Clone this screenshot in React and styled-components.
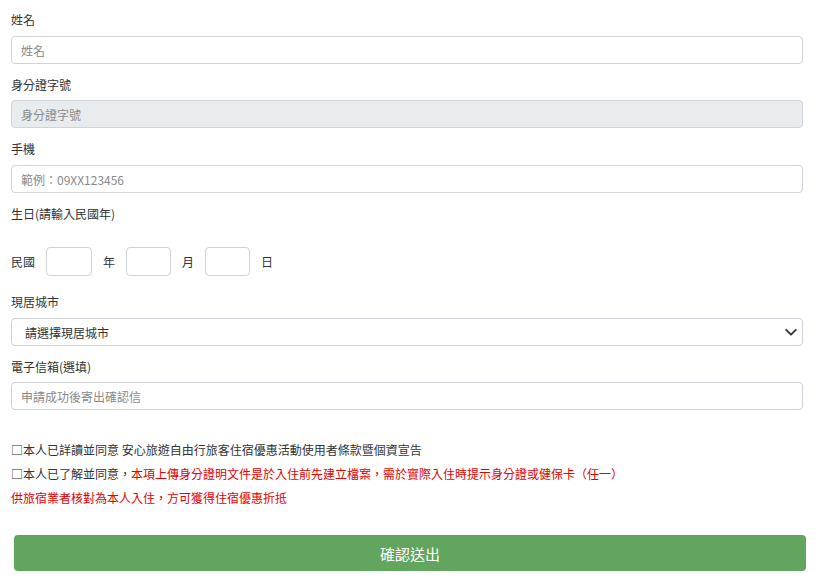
import React from "react";
import styled, { createGlobalStyle } from "styled-components";

const Global = createGlobalStyle`
  html, body { margin: 0; padding: 0; background: #fff; }
  body {
    font-family: "Noto Sans CJK TC", "Noto Sans", "Liberation Sans", sans-serif;
    color: #333;
    font-size: 12px;
  }
  * { box-sizing: border-box; }
`;

const Form = styled.form`
  display: flex;
  flex-direction: column;
  padding: 11px 16px 0 11px;
`;

const Field = styled.div`
  display: flex;
  flex-direction: column;
  margin-bottom: ${(p) => p.$mb ?? 12}px;
`;

const Label = styled.label`
  font-size: 12px;
  line-height: 18px;
  color: #333;
  margin-bottom: ${(p) => p.$mb ?? 7}px;
`;

const Input = styled.input`
  width: 100%;
  height: 28px;
  border: 1px solid #ced4da;
  border-radius: 4px;
  padding: 0 9px;
  font-family: inherit;
  font-size: 12px;
  color: #333;
  background: ${(p) => (p.disabled ? "#e9ecef" : "#fff")};
  outline: none;
  &::placeholder { color: #8a8a8a; }
`;

const DateRow = styled.div`
  display: flex;
  align-items: center;
  gap: 11px;
  margin-top: 24px;
  margin-bottom: 17px;
`;

const DateText = styled.span`
  font-size: 12px;
  color: #333;
`;

const DateBox = styled.input`
  width: ${(p) => p.$w}px;
  height: 29px;
  border: 1px solid #ced4da;
  border-radius: 4px;
  outline: none;
  background: #fff;
  padding: 0 6px;
  font-size: 12px;
`;

const SelectWrap = styled.div`
  height: 28px;
  border: 1px solid #ced4da;
  border-radius: 4px;
  display: flex;
  align-items: center;
  padding: 0 13px;
  background: #fff;
`;

const SelectText = styled.span`
  font-size: 12px;
  color: #333;
  flex: 1;
`;

const Chevron = styled.svg`
  width: 14px;
  height: 14px;
  margin-right: -9px;
`;

const Terms = styled.div`
  display: flex;
  flex-direction: column;
  margin-top: 28px;
  font-size: 12px;
  line-height: 24px;
`;

const Line = styled.div`
  color: ${(p) => (p.$red ? "#e60000" : "#333")};
  white-space: nowrap;
`;

const Red = styled.span`
  color: #e60000;
`;

const Button = styled.button`
  margin: 25px 0 0 3px;
  height: 36px;
  width: 792px;
  border: none;
  border-radius: 4px;
  background: #62a55f;
  color: #fff;
  font-family: inherit;
  font-size: 15px;
  cursor: pointer;
`;

export default function App() {
  return (
    <>
      <Global />
      <Form onSubmit={(e) => e.preventDefault()}>
        <Field>
          <Label>姓名</Label>
          <Input placeholder="姓名" />
        </Field>
        <Field>
          <Label $mb={6}>身分證字號</Label>
          <Input placeholder="身分證字號" disabled />
        </Field>
        <Field>
          <Label $mb={7}>手機</Label>
          <Input placeholder="範例：09XX123456" />
        </Field>
        <Field $mb={0}>
          <Label $mb={0}>生日(請輸入民國年)</Label>
        </Field>
        <DateRow>
          <DateText>民國</DateText>
          <DateBox $w={46} />
          <DateText>年</DateText>
          <DateBox $w={45} />
          <DateText>月</DateText>
          <DateBox $w={45} />
          <DateText>日</DateText>
        </DateRow>
        <Field>
          <Label $mb={7}>現居城市</Label>
          <SelectWrap>
            <SelectText>請選擇現居城市</SelectText>
            <Chevron viewBox="0 0 16 16" aria-hidden="true">
              <path d="M2.5 5.5 L8 11 L13.5 5.5" fill="none" stroke="#343a40" strokeWidth="2.2" strokeLinecap="round" strokeLinejoin="round" />
            </Chevron>
          </SelectWrap>
        </Field>
        <Field $mb={0}>
          <Label $mb={6}>電子信箱(選填)</Label>
          <Input placeholder="申請成功後寄出確認信" />
        </Field>
        <Terms>
          <Line>□本人已詳讀並同意 安心旅遊自由行旅客住宿優惠活動使用者條款暨個資宣告</Line>
          <Line>
            □本人已了解並同意，<Red>本項上傳身分證明文件是於入住前先建立檔案，需於實際入住時提示身分證或健保卡（任一）</Red>
          </Line>
          <Line $red>供旅宿業者核對為本人入住，方可獲得住宿優惠折抵</Line>
        </Terms>
        <Button type="submit">確認送出</Button>
      </Form>
    </>
  );
}
